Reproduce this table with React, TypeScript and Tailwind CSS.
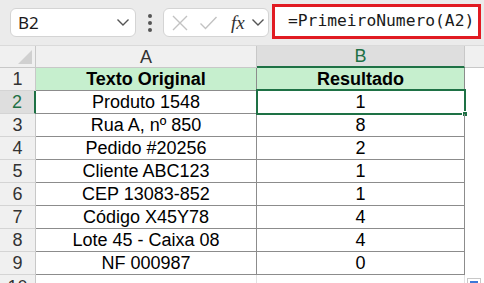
import React from 'react';

const rows = [
  { a: 'Texto Original', b: 'Resultado', header: true },
  { a: 'Produto 1548', b: '1' },
  { a: 'Rua A, nº 850', b: '8' },
  { a: 'Pedido #20256', b: '2' },
  { a: 'Cliente ABC123', b: '1' },
  { a: 'CEP 13083-852', b: '1' },
  { a: 'Código X45Y78', b: '4' },
  { a: 'Lote 45 - Caixa 08', b: '4' },
  { a: 'NF 000987', b: '0' },
];

const Chevron = () => (
  <svg width="14" height="9" viewBox="0 0 14 9" fill="none">
    <path d="M1.5 1.5 L7 7 L12.5 1.5" stroke="#555" strokeWidth="1.4" />
  </svg>
);

export default function App() {
  return (
    <div className="w-[484px] h-[283px] overflow-hidden bg-white font-['Liberation_Sans',Arial,sans-serif] text-black">
      {/* Toolbar */}
      <div className="h-[46px] bg-[#ebebeb] flex items-center pl-[10px] border-b border-[#dadada]">
        <div className="w-[126px] h-[29px] bg-white border border-[#d4d4d4] rounded-[6px] flex items-center justify-between pl-[7px] pr-[5px]">
          <span className="text-[17px] font-['Noto_Sans',sans-serif] text-[#1a1a1a]">B2</span>
          <Chevron />
        </div>
        <div className="w-[27px] flex flex-col items-center gap-[3px]">
          <span className="w-[4px] h-[4px] bg-[#555] rounded-full" />
          <span className="w-[4px] h-[4px] bg-[#555] rounded-full" />
          <span className="w-[4px] h-[4px] bg-[#555] rounded-full" />
        </div>
        <div className="w-[106px] h-[29px] bg-white border border-[#d4d4d4] rounded-[6px] flex items-center pl-[7px] gap-[10px]">
          <svg width="18" height="18" viewBox="0 0 18 18">
            <path d="M2 2 L16 16 M16 2 L2 16" stroke="#c2c2c2" strokeWidth="1.4" />
          </svg>
          <svg width="19" height="16" viewBox="0 0 19 16">
            <path d="M1.5 8.5 L6.5 13.5 L17.5 2" stroke="#c2c2c2" strokeWidth="1.4" fill="none" />
          </svg>
          <span className="font-['Liberation_Serif',serif] italic text-[19px] leading-none text-[#333] ml-[3px]">fx</span>
          <span className="-ml-[4px]"><Chevron /></span>
        </div>
        <div className="ml-[3px] w-[209px] h-[35px] bg-white border-[3px] border-[#e11b22] flex items-center pl-[13px] self-start mt-[4px]">
          <span className="font-['DejaVu_Sans_Mono',monospace] text-[16.3px] text-[#1a1a1a] leading-none">=PrimeiroNumero(A2)</span>
        </div>
      </div>

      {/* Column headers */}
      <div className="flex h-[22px] bg-[#f0f0f0] text-[18px] text-[#333]">
        <div className="w-[36px] border-r border-b border-[#c8c8c8] relative">
          <svg className="absolute right-[3px] bottom-[3px]" width="14" height="14" viewBox="0 0 14 14">
            <path d="M14 0 L14 14 L0 14 Z" fill="#d0d0d0" />
          </svg>
        </div>
        <div className="w-[221px] border-r border-b border-[#c8c8c8] flex items-center justify-center leading-none">A</div>
        <div className="w-[208px] bg-[#dedede] border-r border-[#c8c8c8] border-b-2 border-b-[#1e7145] flex items-center justify-center leading-none text-[#1e7145]">B</div>
        <div className="flex-1 border-b border-[#c8c8c8]" />
      </div>

      {/* Rows */}
      {rows.map((r, i) => {
        const selected = i === 1;
        return (
          <div key={i} className="flex h-[23px] text-[18px] leading-none">
            <div
              className={`w-[36px] flex items-center justify-center border-b border-[#d4d4d4] ${
                selected
                  ? 'bg-[#dedede] text-[#1e7145] border-r-2 border-r-[#1e7145]'
                  : 'bg-[#f0f0f0] text-[#333] border-r border-r-[#c8c8c8]'
              }`}
            >
              {i + 1}
            </div>
            <div
              className={`w-[221px] flex items-center justify-center border-r border-b border-[#8c8c8c] ${
                r.header ? 'bg-[#c6efce] font-bold' : ''
              }`}
            >
              {r.a}
            </div>
            <div
              className={`w-[208px] flex items-center justify-center border-r border-b border-[#8c8c8c] relative ${
                r.header ? 'bg-[#c6efce] font-bold' : ''
              }`}
            >
              {selected && (
                <>
                  <div className="absolute -left-[1px] -top-[2px] w-[210px] h-[26px] border-2 border-[#1e7145]" />
                  <div className="absolute -right-[4px] -bottom-[4px] w-[6px] h-[6px] bg-[#1e7145] border border-white" />
                </>
              )}
              {r.b}
            </div>
            <div className="flex-1" />
          </div>
        );
      })}

      {/* Row 10 partial */}
      <div className="flex h-[23px] text-[18px] leading-none">
        <div className="w-[36px] bg-[#f0f0f0] border-r border-[#c8c8c8] flex items-start justify-center pt-[3px] text-[#333]">10</div>
        <div className="w-[221px] border-r border-[#e2e2e2]" />
        <div className="w-[208px] border-r border-[#e2e2e2]" />
        <div className="flex-1 relative">
          <div className="absolute left-[2px] top-[3px] w-[14px] h-[10px] border border-[#c8c8c8] bg-white">
            <div className="mx-[2px] mt-[2px] h-[3px] bg-[#3b78d8]" />
          </div>
        </div>
      </div>
    </div>
  );
}
